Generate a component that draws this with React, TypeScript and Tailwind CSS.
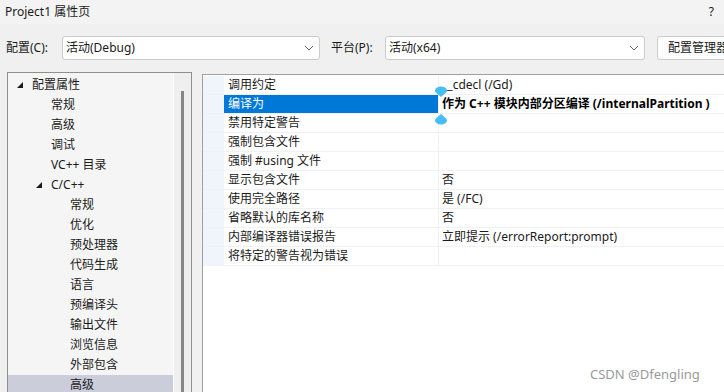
import React from "react";

const font = { fontFamily: '"Noto Sans", "Noto Sans CJK SC", sans-serif' };

function Chevron() {
  return (
    <svg width="10" height="6" viewBox="0 0 10 6" className="shrink-0">
      <path d="M1 1 L5 5 L9 1" fill="none" stroke="#606060" strokeWidth="1" />
    </svg>
  );
}

function Tri() {
  return (
    <svg width="6" height="6" viewBox="0 0 6 6" className="shrink-0">
      <polygon points="6,0 6,6 0,6" fill="#1a1a1a" />
    </svg>
  );
}

const tree: { label: string; level: number; expanded?: boolean; selected?: boolean }[] = [
  { label: "配置属性", level: 0, expanded: true },
  { label: "常规", level: 1 },
  { label: "高级", level: 1 },
  { label: "调试", level: 1 },
  { label: "VC++ 目录", level: 1 },
  { label: "C/C++", level: 1, expanded: true },
  { label: "常规", level: 2 },
  { label: "优化", level: 2 },
  { label: "预处理器", level: 2 },
  { label: "代码生成", level: 2 },
  { label: "语言", level: 2 },
  { label: "预编译头", level: 2 },
  { label: "输出文件", level: 2 },
  { label: "浏览信息", level: 2 },
  { label: "外部包含", level: 2 },
  { label: "高级", level: 2, selected: true },
];

const props: { name: string; value: string; selected?: boolean }[] = [
  { name: "调用约定", value: "__cdecl (/Gd)" },
  { name: "编译为", value: "作为 C++ 模块内部分区编译 (/internalPartition )", selected: true },
  { name: "禁用特定警告", value: "" },
  { name: "强制包含文件", value: "" },
  { name: "强制 #using 文件", value: "" },
  { name: "显示包含文件", value: "否" },
  { name: "使用完全路径", value: "是 (/FC)" },
  { name: "省略默认的库名称", value: "否" },
  { name: "内部编译器错误报告", value: "立即提示 (/errorReport:prompt)" },
  { name: "将特定的警告视为错误", value: "" },
];

function Handle({ up }: { up?: boolean }) {
  return (
    <svg width="14" height="11" viewBox="0 0 14 11">
      {up ? (
        <path d="M7 0 L11 3.5 A6 4 0 1 1 3 3.5 Z" fill="#45bdf7" />
      ) : (
        <path d="M7 11 L11 7.5 A6 4 0 1 0 3 7.5 Z" fill="#45bdf7" />
      )}
    </svg>
  );
}

export default function App() {
  return (
    <div
      className="relative h-[392px] w-[724px] overflow-hidden bg-[#f0f0f0] text-[12px] text-[#1a1a1a]"
      style={font}
    >
      {/* title bar */}
      <div className="flex h-[24px] items-center justify-between bg-[#f3f3f3] pl-[5px] pr-[10px]">
        <span className="text-[12px] leading-none">Project1 属性页</span>
        <span className="text-[12px] leading-none">?</span>
      </div>

      {/* config row */}
      <div className="mt-[12px] flex h-[24px] items-center pl-[6px]">
        <span className="w-[56px] shrink-0 whitespace-nowrap">配置(C):</span>
        <div className="flex h-[24px] w-[258px] shrink-0 items-center justify-between rounded-[3px] border border-[#cccccc] bg-white pl-[3px] pr-[5px]">
          <span>活动(Debug)</span>
          <Chevron />
        </div>
        <span className="ml-[11px] w-[54px] shrink-0 whitespace-nowrap">平台(P):</span>
        <div className="flex h-[24px] w-[260px] shrink-0 items-center justify-between rounded-[3px] border border-[#cccccc] bg-white pl-[3px] pr-[5px]">
          <span>活动(x64)</span>
          <Chevron />
        </div>
        <div className="ml-[12px] flex h-[24px] w-[90px] shrink-0 items-center whitespace-nowrap rounded-[3px] border border-[#cccccc] bg-[#fdfdfd] pl-[10px]">
          配置管理器
        </div>
      </div>

      {/* main */}
      <div className="mt-[12px] flex h-[320px]">
        {/* tree */}
        <div className="ml-[7px] flex w-[185px] shrink-0 border-l border-r border-t border-[#8f8f8f]">
          <div className="w-[165px] bg-[#f5f5f5] pt-[2px]">
            {tree.map((t, i) => (
              <div
                key={i}
                className={
                  "flex h-[20px] items-center whitespace-nowrap " +
                  (t.selected ? "bg-[#cbcdda]" : "")
                }
              >
                <div
                  className="flex w-[24px] justify-end pr-[9px]"
                  style={{ marginLeft: t.level * 19 }}
                >
                  {t.expanded ? <Tri /> : null}
                </div>
                <span>{t.label}</span>
              </div>
            ))}
          </div>
          <div className="w-px bg-white" />
          <div className="flex flex-1 justify-center bg-[#efefef] pt-[18px]">
            <div className="h-full w-[3px] bg-[#868686]" />
          </div>
        </div>

        {/* property grid */}
        <div className="ml-[10px] mt-[2px] flex-1 border-l border-t border-[#a0a0a0] bg-white pt-[1px]">
          {props.map((p, i) => (
            <div key={i} className="flex h-[19px] border-b border-[#eef1f6]">
              <div className="w-[21px] shrink-0 bg-[#f0f4fb]" />
              <div
                className={
                  "flex w-[214px] shrink-0 items-center whitespace-nowrap pl-[4px] " +
                  (p.selected ? "bg-[#0078d7] text-white" : "")
                }
              >
                {p.name}
              </div>
              <div className="w-px shrink-0 bg-[#eef1f6]" />
              <div
                className={
                  "flex flex-1 items-center whitespace-nowrap pl-[3px] " +
                  (p.selected ? "font-bold text-black" : "")
                }
              >
                {p.value}
              </div>
            </div>
          ))}
        </div>
      </div>

      {/* selection handles */}
      <div className="absolute left-[434px] top-[86px]">
        <Handle />
      </div>
      <div className="absolute left-[434px] top-[114px]">
        <Handle up />
      </div>

      {/* watermark */}
      <div className="absolute left-[590px] top-[365px] text-[13px] text-[#9a9a9a]">
        CSDN @Dfengling
      </div>
    </div>
  );
}
